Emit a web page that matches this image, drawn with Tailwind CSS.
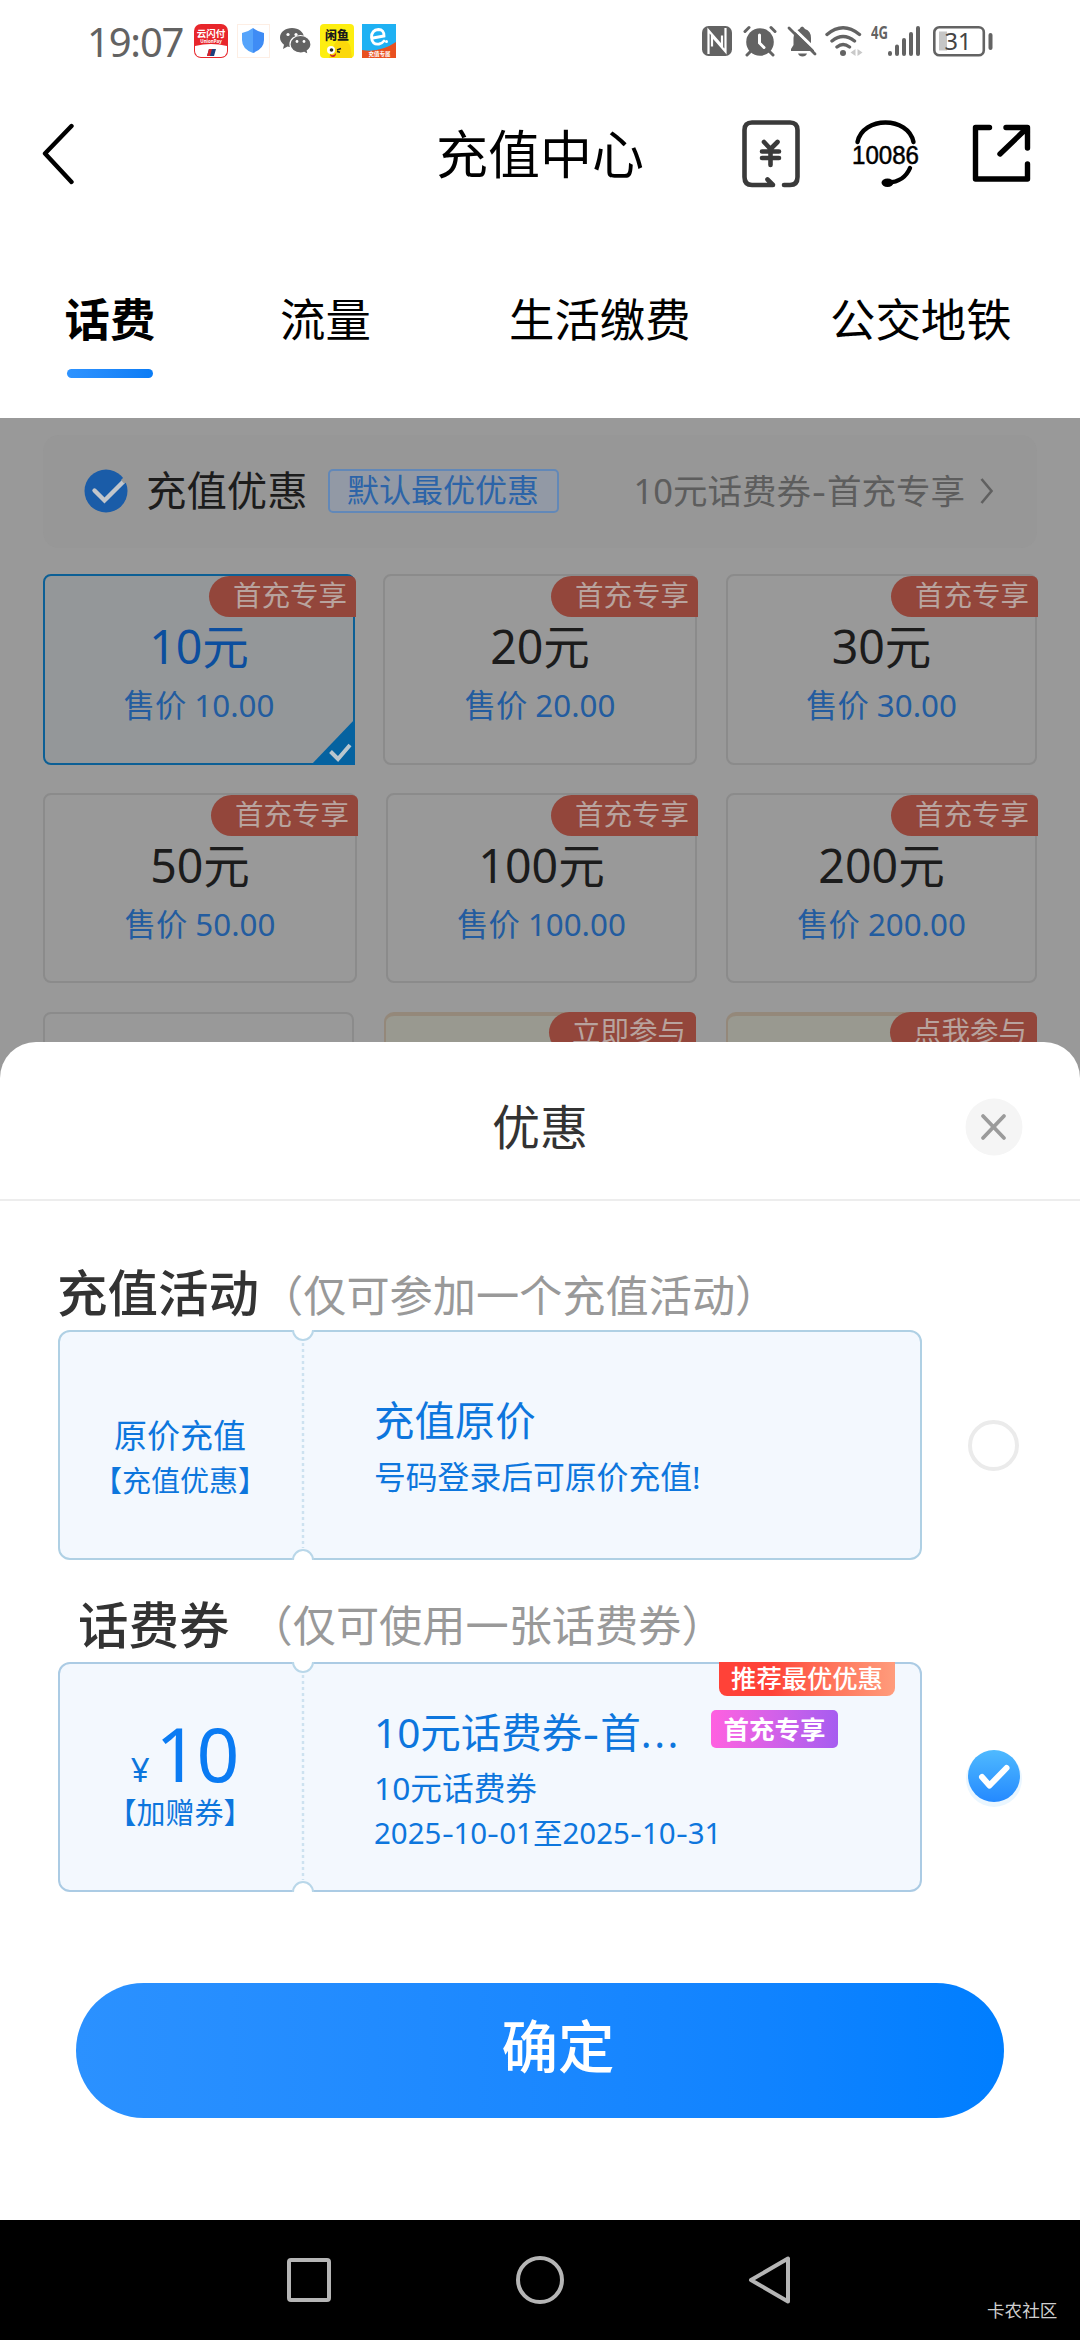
<!DOCTYPE html>
<html lang="zh-CN">
<head>
<meta charset="utf-8">
<title>充值中心</title>
<script src="https://cdn.jsdelivr.net/npm/@tailwindcss/browser@4"></script>
</head>
<body class="bg-white">
<div class="flex h-[2340px] w-[1080px] flex-col overflow-hidden bg-white font-['Noto_Sans','Noto_Sans_CJK_SC',sans-serif] whitespace-nowrap">

  <!-- status bar -->
  <div class="flex h-[82px] shrink-0 items-center pl-[87px] text-[#636363]">
    <span class="w-[107px] text-[40px] leading-[82px] tracking-[-1.2px] pt-[2px]">19:07</span>
    <svg class="h-[34px] w-[34px]" viewBox="0 0 34 34"><rect width="34" height="34" rx="7" fill="#e8262b"/><path d="M1 22 Q17 18 33 22 V27 a6 6 0 0 1-6 6 H7 a6 6 0 0 1-6-6Z" fill="#fff"/><path d="M15 25h7l-2 7h-7z" fill="#1d3f7d"/><path d="M15 25h3l-2 7h-3z" fill="#d8232a"/><text x="17" y="13" text-anchor="middle" font-size="9.5" font-weight="700" fill="#fff" font-family="Noto Sans CJK SC">云闪付</text><text x="17" y="19" text-anchor="middle" font-size="4.5" font-weight="700" fill="#fff" font-family="Noto Sans">UnionPay</text></svg>
    <svg class="ml-[9px] h-[34px] w-[34px]" viewBox="0 0 34 34"><rect x=".5" y=".5" width="32" height="33" fill="none" stroke="#fdeee4"/><path d="M16 4 Q21 8 27 9 V16 Q27 25 16 29Z" fill="#3f8cf5"/><path d="M16 4 Q11 8 5 9 V16 Q5 25 16 29Z" fill="#55a4fb"/></svg>
    <svg class="ml-[8px] h-[34px] w-[34px]" viewBox="0 0 34 34" fill="#636363"><path d="M13 4C6.500 4 1 8 1 13.500c0 3 1.700 5.500 4 7.300L4 25l4.500-2.400c1.300.4 3 .6 4.500.6 6.500 0 12-4 12-9.500S19.500 4 13 4Z"/><circle cx="9" cy="10.500" r="1.600" fill="#fff"/><circle cx="17" cy="10.500" r="1.600" fill="#fff"/><path d="M21.500 11.500c-5.800 0-10.500 3.800-10.500 8.700S15.700 29 21.500 29c1.300 0 2.600-.2 3.700-.6l4 2.100-.9-3.700c2.200-1.600 3.700-4 3.700-6.600 0-4.900-4.700-8.700-10.500-8.700Z" stroke="#fff" stroke-width="1.200"/><circle cx="18" cy="17.500" r="1.400" fill="#fff"/><circle cx="25" cy="17.500" r="1.400" fill="#fff"/></svg>
    <svg class="ml-[7px] h-[34px] w-[34px]" viewBox="0 0 34 34"><rect width="34" height="34" rx="4" fill="#fdee10"/><path d="M9 34 Q10 27 14 21 Q17 15 23 16 Q31 18 31 27 L32 34Z" fill="#fbd80b"/><circle cx="11" cy="26" r="4" fill="#fff"/><circle cx="11.500" cy="26" r="1.800" fill="#222"/><path d="M17 26l4-1.500M17 27.500l3 .8" stroke="#222" stroke-width="1.400"/><path d="M10 30q3 3 6-1q0 4-3 4t-3-3z" fill="#c22"/><text x="17" y="15.500" text-anchor="middle" font-size="12" font-weight="900" fill="#1b1b1b" font-family="Noto Sans CJK SC">闲鱼</text></svg>
    <svg class="ml-[8px] h-[34px] w-[34px]" viewBox="0 0 34 34"><rect width="34" height="34" fill="#1fb1f3"/><path d="M0 26 Q18 29 34 18 V34 H0Z" fill="#e9501f"/><path d="M11 14 L22 12 Q22 5.500 16.500 5.500 Q9.500 6 9.500 13.500 Q10 21 17 20 Q20 19.500 22 17" fill="none" stroke="#fff" stroke-width="2.800" stroke-linecap="round"/><circle cx="24.500" cy="17.500" r="1.500" fill="#fff"/><text x="17.500" y="32" text-anchor="middle" font-size="5.500" font-weight="700" fill="#fff" font-family="Noto Sans CJK SC">充值专属</text></svg>

    <svg class="ml-[306px] h-[30px] w-[30px]" viewBox="0 0 30 30"><rect width="30" height="30" rx="6.500" fill="#636363"/><path d="M6.500 28 V4.500 L20 20 V9.500 M23.500 2 V25.500 L10 10 V20.500" fill="none" stroke="#fff" stroke-width="2.200"/></svg>
    <svg class="ml-[11px] h-[32px] w-[34px]" viewBox="0 0 34 32" fill="none" stroke="#636363" stroke-linecap="round"><circle cx="17" cy="17" r="13.800" fill="#636363" stroke="none"/><path d="M2 6.500 L6 2.500 M32 6.500 L28 2.500" stroke-width="3"/><path d="M4 30 L8 26 M30 30 L26 26" stroke-width="3"/><path d="M16.500 10 V18 L21 22.500" stroke="#fff" stroke-width="3"/></svg>
    <svg class="ml-[10px] h-[32px] w-[30px]" viewBox="0 0 30 32"><path d="M4 26 V24 L6.500 20 V13 Q7 6 12.500 4 Q15-1 18 4 Q24 6 24 13 V20 L27 25 V26Z M11 28.500 H20 Q19 31.500 15.500 31.500 T11 28.500Z" fill="#636363"/><path d="M2 -1 L31 27" stroke="#fff" stroke-width="3"/><path d="M2 3 L28 29" stroke="#636363" stroke-width="2.800" stroke-linecap="round"/></svg>
    <svg class="ml-[8px] h-[32px] w-[38px]" viewBox="0 0 38 32" fill="none" stroke="#636363" stroke-width="3.400" stroke-linecap="round"><path d="M2 9.500 Q18-4 34.500 9.500 M7 16 Q18 7 29.500 16 M12 22 Q18 17 24.500 22"/><circle cx="18" cy="28" r="3" fill="#636363" stroke="none"/><path d="M25.500 27.500 l5-3.500v7z M37.500 27.500 l-5-3.500v7z" fill="#c9c9c9" stroke="none"/></svg>
    <svg class="ml-[8px] h-[40px] w-[50px]" viewBox="0 -4 50 40"><text x="0" y="14" font-size="17" font-weight="700" textLength="17" lengthAdjust="spacingAndGlyphs" fill="#636363" font-family="Noto Sans">4G</text><g stroke="#636363" stroke-width="4" stroke-linecap="round"><path d="M19 28v1M26 21.500v7.500M33 15v14M40 9v20M47 3v26"/></g></svg>
    <svg class="ml-[12px] h-[32px] w-[60px]" viewBox="0 0 60 32"><rect x="6" y="6.500" width="8" height="19" fill="#c6c6c6"/><rect x="1.300" y="2.300" width="49.500" height="28" rx="5" fill="none" stroke="#636363" stroke-width="2.600"/><rect x="55.500" y="8" width="4" height="17" rx="2" fill="#636363"/><text x="25" y="25" text-anchor="middle" font-size="23.500" fill="#444" font-family="Noto Sans">31</text></svg>
  </div>

  <!-- title bar -->
  <div class="flex h-[144px] shrink-0 items-center pl-[40px]">
    <svg class="h-[62px] w-[36px]" viewBox="0 0 36 62"><path d="M31.500 3 L5 30.500 L31.500 59" fill="none" stroke="#000" stroke-width="4.400" stroke-linecap="round" stroke-linejoin="round"/></svg>
    <span class="ml-[360px] text-[52px] leading-[72px] text-black">充值中心</span>
    <svg class="ml-[97px] h-[70px] w-[60px]" viewBox="0 0 60 70" fill="none" stroke="#3a3a3a" stroke-width="4.600" stroke-linecap="round" stroke-linejoin="round"><path d="M43 66 H49 Q56.500 66 56.500 58 V11 Q56.500 3.500 49 3.500 H11 Q3.500 3.500 3.500 11 V58 Q3.500 66 11 66 H32 L26.500 60.500"/><path d="M23 23 L29.500 30 L36.500 23 M21 32.500 H38 M21 39 H38 M29.500 31 V46"/></svg>
    <svg class="ml-[45px] h-[70px] w-[80px]" viewBox="-4 0 80 70"><path d="M7.500 23 C13 -3 58 -3 63.500 23" fill="none" stroke="#000" stroke-width="4.400" stroke-linecap="round"/><path d="M60 49 Q54 63 38 63.500" fill="none" stroke="#000" stroke-width="4.400" stroke-linecap="round"/><ellipse cx="37.500" cy="63.800" rx="6" ry="4.200" fill="#000"/><text x="35.500" y="44.500" text-anchor="middle" font-size="25" textLength="67" lengthAdjust="spacingAndGlyphs" fill="#000" stroke="#000" stroke-width=".5" font-family="Liberation Sans">10086</text></svg>
    <svg class="ml-[45px] h-[60px] w-[60px]" viewBox="0 0 60 60" fill="none" stroke="#000" stroke-width="5.400" stroke-linecap="round" stroke-linejoin="round"><path d="M18.500 3.500 H4.500 V55 H56.500 V40 M35 3.500 H56.500 V24 M55 5 L29 30"/></svg>
  </div>

  <!-- tabs -->
  <div class="flex h-[192px] shrink-0 pt-[63px] pl-[65px] text-[45.400px] leading-[60px] text-black">
    <div class="flex w-[90px] flex-col items-center"><span class="font-bold">话费</span><div class="mt-[20px] h-[9px] w-[86px] rounded-full bg-linear-to-r from-[#2e93ff] to-[#0a7cf5]"></div></div>
    <span class="ml-[125px] w-[91px]">流量</span>
    <span class="ml-[138px] w-[182px]">生活缴费</span>
    <span class="ml-[139px]">公交地铁</span>
  </div>

  <!-- dimmed page content -->
  <div class="flex h-[674px] shrink-0 flex-col overflow-hidden bg-[#999] px-[43px] pt-[17px]">
    <div class="flex h-[113px] w-[994px] shrink-0 items-center rounded-2xl bg-[#979797] pb-[2px] pl-[41px]">
      <svg class="h-[44px] w-[44px]" viewBox="0 0 44 44"><circle cx="22" cy="22" r="21.500" fill="#1a5ca8"/><path d="M10.500 21.500 L20.500 31.500 L39.500 12.500" fill="none" stroke="#c2c6cb" stroke-width="4.400" stroke-linecap="round"/><path d="M37 11 L42 6 L45 12 L40 14.500Z" fill="#979797"/></svg>
      <span class="ml-[18px] text-[40.400px] leading-[56px] text-[#1c1c1c]">充值优惠</span>
      <span class="ml-[20px] flex h-[44px] w-[231px] items-center justify-center rounded-[5px] border-2 border-[#6288b8] bg-[#9299a5] pb-[2px] text-[32px] leading-[38px] text-[#2c64a8]">默认最优优惠</span>
      <span class="ml-[75px] text-[34.500px] leading-[50px] text-[#5d5d5d]">10元话费券<span class="inline-block w-[16px] scale-x-125 text-center">-</span>首充专享</span>
      <svg class="ml-[13px] h-[30px] w-[16px]" viewBox="0 0 16 30"><path d="M3.500 3 L13.500 15 L3.500 27" fill="none" stroke="#606060" stroke-width="2.600"/></svg>
    </div>

    <div class="mt-[26px] flex h-[191px] shrink-0">
      <div class="relative flex w-[312px] flex-col items-center rounded-[8px] border-2 border-[#0c5f95] bg-[#949799] pt-[42px]">
        <span class="text-[46.500px] leading-[56px] text-[#0c4e9e]">10元</span>
        <span class="mt-[3px] text-[31.300px] leading-[56px] text-[#235c9f]">售价 10.00</span>
        <span class="absolute top-0 -right-[3px] flex h-[41px] w-[147px] items-center justify-end rounded-l-[21px] rounded-tr-[6px] bg-[#93463b] pr-[9px] pb-[3px] text-[28.500px] leading-[38px] text-[#b8a39e]">首充专享</span>
        <svg class="absolute -right-[2px] -bottom-[2px] h-[46px] w-[46px]" viewBox="0 0 46 46"><path d="M46 0 V46 H2Z" fill="#0562a0"/><path d="M21.500 32.500 L29 40 L41 26" fill="none" stroke="#b9c6ce" stroke-width="4"/></svg>
      </div>
      <div class="relative ml-[28px] flex w-[314px] flex-col items-center rounded-[8px] border-2 border-[#8b8b8b] pt-[42px]">
        <span class="text-[46.500px] leading-[56px] text-[#1c1c1c]">20元</span>
        <span class="mt-[3px] text-[31.300px] leading-[56px] text-[#235c9f]">售价 20.00</span>
        <span class="absolute top-0 -right-[3px] flex h-[41px] w-[147px] items-center justify-end rounded-l-[21px] rounded-tr-[6px] bg-[#93463b] pr-[9px] pb-[3px] text-[28.500px] leading-[38px] text-[#b8a39e]">首充专享</span>
      </div>
      <div class="relative ml-[29px] flex w-[311px] flex-col items-center rounded-[8px] border-2 border-[#8b8b8b] pt-[42px]">
        <span class="text-[46.500px] leading-[56px] text-[#1c1c1c]">30元</span>
        <span class="mt-[3px] text-[31.300px] leading-[56px] text-[#235c9f]">售价 30.00</span>
        <span class="absolute top-0 -right-[3px] flex h-[41px] w-[147px] items-center justify-end rounded-l-[21px] rounded-tr-[6px] bg-[#93463b] pr-[9px] pb-[3px] text-[28.500px] leading-[38px] text-[#b8a39e]">首充专享</span>
      </div>
    </div>

    <div class="mt-[28px] flex h-[190px] shrink-0">
      <div class="relative flex w-[314px] flex-col items-center rounded-[8px] border-2 border-[#8b8b8b] pt-[42px]">
        <span class="text-[46.500px] leading-[56px] text-[#1c1c1c]">50元</span>
        <span class="mt-[3px] text-[31.300px] leading-[56px] text-[#235c9f]">售价 50.00</span>
        <span class="absolute top-0 -right-[3px] flex h-[41px] w-[147px] items-center justify-end rounded-l-[21px] rounded-tr-[6px] bg-[#93463b] pr-[9px] pb-[3px] text-[28.500px] leading-[38px] text-[#b8a39e]">首充专享</span>
      </div>
      <div class="relative ml-[29px] flex w-[311px] flex-col items-center rounded-[8px] border-2 border-[#8b8b8b] pt-[42px]">
        <span class="text-[46.500px] leading-[56px] text-[#1c1c1c]">100元</span>
        <span class="mt-[3px] text-[31.300px] leading-[56px] text-[#235c9f]">售价 100.00</span>
        <span class="absolute top-0 -right-[3px] flex h-[41px] w-[147px] items-center justify-end rounded-l-[21px] rounded-tr-[6px] bg-[#93463b] pr-[9px] pb-[3px] text-[28.500px] leading-[38px] text-[#b8a39e]">首充专享</span>
      </div>
      <div class="relative ml-[29px] flex w-[311px] flex-col items-center rounded-[8px] border-2 border-[#8b8b8b] pt-[42px]">
        <span class="text-[46.500px] leading-[56px] text-[#1c1c1c]">200元</span>
        <span class="mt-[3px] text-[31.300px] leading-[56px] text-[#235c9f]">售价 200.00</span>
        <span class="absolute top-0 -right-[3px] flex h-[41px] w-[147px] items-center justify-end rounded-l-[21px] rounded-tr-[6px] bg-[#93463b] pr-[9px] pb-[3px] text-[28.500px] leading-[38px] text-[#b8a39e]">首充专享</span>
      </div>
    </div>

    <div class="mt-[29px] flex h-[190px] shrink-0">
      <div class="w-[311px] rounded-[8px] border-2 border-[#8b8b8b]"></div>
      <div class="relative ml-[30px] w-[312px] rounded-[10px] border-x-2 border-t-4 border-[#94887a] bg-[#999990]">
        <span class="absolute -top-[4px] -right-[2px] flex h-[41px] w-[147px] items-center justify-end rounded-l-[21px] rounded-tr-[6px] bg-[#93463b] pr-[10px] pb-[3px] text-[28.500px] leading-[38px] text-[#b8a39e]">立即参与</span>
      </div>
      <div class="relative ml-[30px] w-[311px] rounded-[10px] border-x-2 border-t-4 border-[#94887a] bg-[#999990]">
        <span class="absolute -top-[4px] -right-[2px] flex h-[41px] w-[147px] items-center justify-end rounded-l-[21px] rounded-tr-[6px] bg-[#93463b] pr-[10px] pb-[3px] text-[28.500px] leading-[38px] text-[#b8a39e]">点我参与</span>
      </div>
    </div>
  </div>

  <!-- bottom sheet -->
  <div class="relative -mt-[50px] flex h-[1178px] shrink-0 flex-col rounded-t-[36px] bg-white">
    <div class="flex h-[159px] shrink-0 items-center border-b-2 border-[#ededed] pt-[13px] pl-[492px]">
      <span class="text-[48px] leading-[64px] text-[#333]">优惠</span>
      <svg class="ml-[377px] h-[58px] w-[58px]" viewBox="0 0 58 58"><circle cx="29" cy="29" r="28.500" fill="#f5f5f5"/><path d="M18 18 L39 40 M39 18 L18 40" stroke="#9b9b9b" stroke-width="3.800" stroke-linecap="round"/></svg>
    </div>

    <div class="mt-[55px] flex h-[74px] shrink-0 items-start pl-[57px]">
      <span class="pt-[1px] text-[50.500px] leading-[66px] font-medium text-[#333] [font-family:'Noto_Sans_CJK_SC',sans-serif]">充值活动</span>
      <span class="ml-[1px] pt-[10px] text-[43.200px] leading-[60px] text-[#999]">（仅可参加一个充值活动）</span>
    </div>
    <div class="flex h-[230px] shrink-0 items-center pl-[58px]">
      <div class="relative flex h-[230px] w-[864px] rounded-[12px] border-2 border-[#afd0e4] bg-[#f3f8fe]">
        <svg class="absolute -top-[2px] left-[231px] h-[230px] w-[24px]" viewBox="0 0 24 230"><path d="M2 0 A10 10 0 0 0 22 0Z M2 230 A10 10 0 0 1 22 230Z" fill="#fff"/><path d="M2 0 A10 10 0 0 0 22 0 M2 230 A10 10 0 0 1 22 230" fill="none" stroke="#b9d7e9" stroke-width="2"/><path d="M12 13 V218" stroke="#cde2f0" stroke-width="2.400" stroke-dasharray="3 3"/></svg>
        <div class="flex w-[240px] flex-col items-center pt-[82px] text-[#0d76dd]">
          <span class="text-[33px] leading-[44px]">原价充值</span>
          <span class="text-[29px] leading-[46px]">【充值优惠】</span>
        </div>
        <div class="flex flex-col pt-[61px] pl-[74px] text-[#0d76dd]">
          <span class="text-[40.400px] leading-[56px]">充值原价</span>
          <span class="text-[31.800px] leading-[56px]">号码登录后可原价充值!</span>
        </div>
      </div>
      <div class="ml-[46px] h-[51px] w-[51px] rounded-full border-4 border-[#ebebeb]"></div>
    </div>

    <div class="mt-[28px] flex h-[74px] shrink-0 items-start pl-[78px]">
      <span class="pt-[1px] text-[50.500px] leading-[66px] font-medium text-[#333] [font-family:'Noto_Sans_CJK_SC',sans-serif]">话费券</span>
      <span class="ml-[20px] pt-[8px] text-[43.200px] leading-[60px] text-[#999]">（仅可使用一张话费券）</span>
    </div>
    <div class="flex h-[230px] shrink-0 items-center pl-[58px]">
      <div class="relative flex h-[230px] w-[864px] rounded-[12px] border-2 border-[#abcbe4] bg-[#f3f8fe]">
        <svg class="absolute -top-[2px] left-[231px] h-[230px] w-[24px]" viewBox="0 0 24 230"><path d="M2 0 A10 10 0 0 0 22 0Z M2 230 A10 10 0 0 1 22 230Z" fill="#fff"/><path d="M2 0 A10 10 0 0 0 22 0 M2 230 A10 10 0 0 1 22 230" fill="none" stroke="#b9d7e9" stroke-width="2"/><path d="M12 13 V218" stroke="#cde2f0" stroke-width="2.400" stroke-dasharray="3 3"/></svg>
        <div class="flex w-[240px] flex-col items-center pt-[49px] text-[#0d76dd]">
          <div class="flex h-[80px] items-baseline gap-[6px] pl-[8px] leading-[80px]"><span class="text-[33px]">¥</span><span class="text-[75px] tracking-[-2px] text-[#0a7bf3]">10</span></div>
          <span class="text-[29px] leading-[40px]">【加赠券】</span>
        </div>
        <div class="flex flex-col pt-[41px] pl-[74px] text-[#0d76dd]">
          <div class="flex h-[56px] items-center"><span class="w-[318px] text-[40.500px] leading-[56px]">10元话费券<span class="inline-block w-[18px] scale-x-125 text-center">-</span>首<span class="tracking-[2.500px]">...</span></span><span class="ml-[19px] mt-[-8px] flex h-[38px] w-[127px] items-center justify-center rounded-[5px] bg-linear-to-r from-[#ff60e0] to-[#a65cf0] text-[25.500px] leading-[38px] font-bold text-white">首充专享</span></div>
          <span class="text-[31.700px] leading-[54px]">10元话费券</span>
          <span class="text-[29.500px] leading-[36px]">2025<span class="inline-block w-[12px] scale-x-125 text-center">-</span>10<span class="inline-block w-[12px] scale-x-125 text-center">-</span>01至2025<span class="inline-block w-[12px] scale-x-125 text-center">-</span>10<span class="inline-block w-[12px] scale-x-125 text-center">-</span>31</span>
        </div>
        <span class="absolute -top-[2px] left-[659px] flex h-[34px] w-[176px] items-center justify-center rounded-b-[8px] bg-linear-to-r from-[#ff4238] from-30% to-[#ff9c7c] pb-[4px] text-[25.300px] leading-[30px] font-medium text-white [font-family:'Noto_Sans_CJK_SC',sans-serif]">推荐最优优惠</span>
      </div>
      <svg class="ml-[41px] h-[64px] w-[62px]" viewBox="0 0 62 64"><defs><linearGradient id="tick" x1="0" y1="0" x2="0" y2="1"><stop offset="0" stop-color="#4fbaff"/><stop offset="1" stop-color="#2489ff"/></linearGradient></defs><circle cx="31" cy="34" r="28" fill="#eaf6ff"/><circle cx="31" cy="31" r="26" fill="url(#tick)"/><path d="M19 32 L26.500 40.500 L43.500 23" fill="none" stroke="#fff" stroke-width="6" stroke-linecap="round" stroke-linejoin="round"/></svg>
    </div>

    <div class="mt-[91px] ml-[76px] flex h-[135px] w-[928px] shrink-0 justify-center rounded-full bg-linear-to-r from-[#2b91ff] to-[#007eff] pl-[36px] text-[56.500px] leading-[120px] font-medium text-white [font-family:'Noto_Sans_CJK_SC',sans-serif]">确定</div>
  </div>

  <!-- system navigation -->
  <div class="flex h-[120px] shrink-0 items-center bg-black pl-[284px]">
    <svg class="h-[52px] w-[50px]" viewBox="0 0 50 52"><rect x="5" y="6" width="40" height="40" rx="2" fill="none" stroke="#b5b5b5" stroke-width="4"/></svg>
    <svg class="ml-[181px] h-[52px] w-[50px]" viewBox="0 0 50 52"><circle cx="25" cy="26" r="22" fill="none" stroke="#b5b5b5" stroke-width="4"/></svg>
    <svg class="ml-[181px] h-[52px] w-[50px]" viewBox="0 0 50 52"><path d="M42 4.500 V47.500 L5 26Z" fill="none" stroke="#b5b5b5" stroke-width="4" stroke-linejoin="round"/></svg>
    <span class="mt-[60px] ml-[191px] text-[17.600px] leading-[24px] text-[#cfcfcf]">卡农社区</span>
  </div>
</div>
</body>
</html>
